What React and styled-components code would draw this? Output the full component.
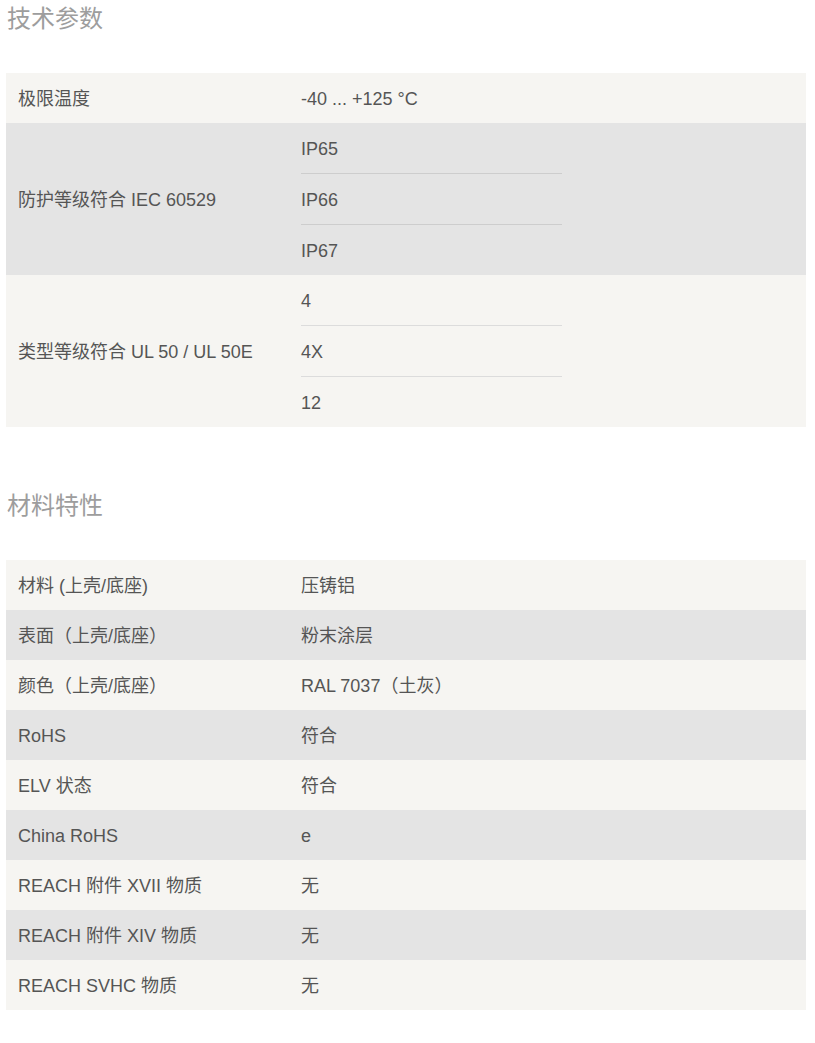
import React from "react";
import styled, { createGlobalStyle } from "styled-components";

const Global = createGlobalStyle`
  html, body { margin: 0; padding: 0; background: #ffffff; }
  body { font-family: "Liberation Sans", "Noto Sans CJK SC", sans-serif; }
  * { box-sizing: border-box; }
`;

const Page = styled.div`
  width: 800px;
  margin-left: 6px;
  padding-top: 1px;
  display: flex;
  flex-direction: column;
`;

const Section = styled.section`
  display: flex;
  flex-direction: column;
  margin-bottom: ${(p) => (p.$last ? "0" : "61px")};
`;

const Title = styled.h3`
  margin: 0 0 36px 1px;
  height: 36px;
  line-height: 36px;
  font-size: 24px;
  font-weight: normal;
  color: #9d9d9d;
  font-family: "Liberation Sans", "Noto Sans CJK SC", sans-serif;
`;

const Table = styled.div`
  display: flex;
  flex-direction: column;
`;

const Row = styled.div`
  display: grid;
  grid-template-columns: 283px 1fr;
  min-height: 50px;
  background: ${(p) => (p.$shade ? "#e4e4e4" : "#f6f5f2")};
  color: #555555;
  font-size: 18px;
  line-height: 24px;
`;

const Label = styled.div`
  display: flex;
  align-items: center;
  padding: 2px 0 0 12px;
`;

const Value = styled.div`
  display: flex;
  align-items: center;
  padding-left: 12px;
  padding-top: ${(p) => (p.$multi ? "0" : "2px")};
`;

const SubList = styled.div`
  display: flex;
  flex-direction: column;
  width: 261px;
`;

const SubItem = styled.div`
  height: ${(p) => (p.$first ? "50px" : "51px")};
  padding-top: 2px;
  display: flex;
  align-items: center;
  border-top: ${(p) => (p.$first ? "none" : `1px solid ${p.$line}`)};
`;

const tech = [
  { label: "极限温度", values: ["-40 ... +125 °C"] },
  { label: "防护等级符合 IEC 60529", values: ["IP65", "IP66", "IP67"] },
  { label: "类型等级符合 UL 50 / UL 50E", values: ["4", "4X", "12"] },
];

const material = [
  { label: "材料 (上壳/底座)", values: ["压铸铝"] },
  { label: "表面（上壳/底座）", values: ["粉末涂层"] },
  { label: "颜色（上壳/底座）", values: ["RAL 7037（土灰）"] },
  { label: "RoHS", values: ["符合"] },
  { label: "ELV 状态", values: ["符合"] },
  { label: "China RoHS", values: ["e"] },
  { label: "REACH 附件 XVII 物质", values: ["无"] },
  { label: "REACH 附件 XIV 物质", values: ["无"] },
  { label: "REACH SVHC 物质", values: ["无"] },
];

function SpecTable({ rows }) {
  return (
    <Table>
      {rows.map((r, i) => {
        const shade = i % 2 === 1;
        const multi = r.values.length > 1;
        return (
          <Row key={r.label} $shade={shade}>
            <Label>{r.label}</Label>
            <Value $multi={multi}>
              {!multi ? (
                r.values[0]
              ) : (
                <SubList>
                  {r.values.map((v, j) => (
                    <SubItem key={v} $first={j === 0} $line={shade ? "#cdcdcd" : "#dcdcdc"}>
                      {v}
                    </SubItem>
                  ))}
                </SubList>
              )}
            </Value>
          </Row>
        );
      })}
    </Table>
  );
}

export default function App() {
  return (
    <>
      <Global />
      <Page>
        <Section>
          <Title>技术参数</Title>
          <SpecTable rows={tech} />
        </Section>
        <Section $last>
          <Title>材料特性</Title>
          <SpecTable rows={material} />
        </Section>
      </Page>
    </>
  );
}
